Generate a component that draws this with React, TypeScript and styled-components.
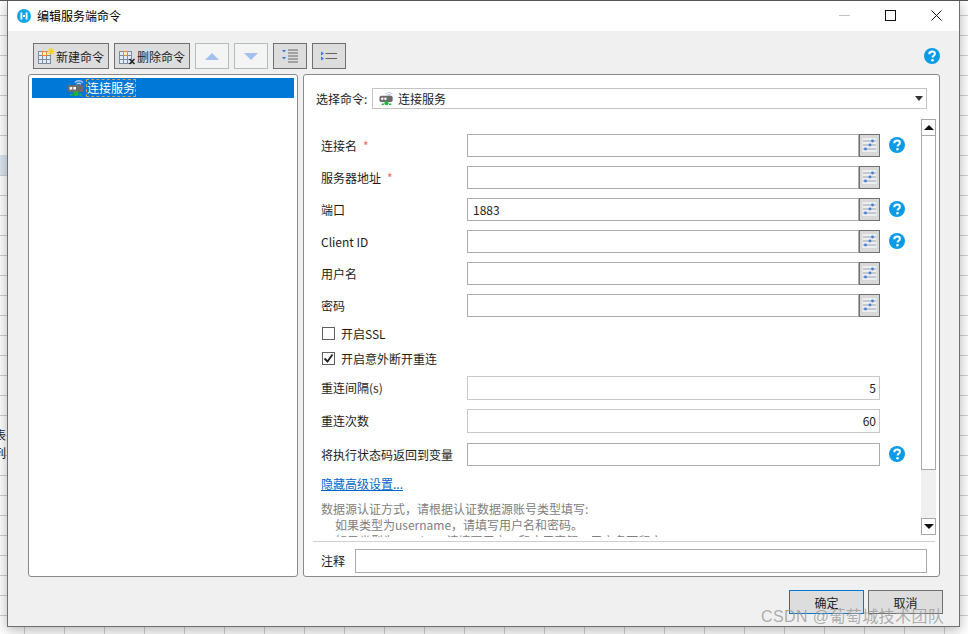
import { createGlobalStyle } from "styled-components";
import styled from "styled-components";

const GlobalStyle = createGlobalStyle`
    html, body {
        margin: 0;
        height: 100%;
        overflow: hidden;
    }
    body {
        font-family: "Noto Sans CJK SC", "Liberation Sans", sans-serif;
        font-size: 12px;
        color: #1c1c1c;
        background-color: #ffffff;
        background-image:
            linear-gradient(to right, #d0d0d0 1px, transparent 1px),
            linear-gradient(to bottom, #d0d0d0 1px, transparent 1px);
        background-size: 40px 20px;
        background-position: 24px 15px;
    }
`;

const Page = styled.div`
    position: relative;
    width: 968px;
    height: 634px;
    overflow: hidden;
    border-top: 1px solid #555555;
    box-sizing: border-box;
`;

const SelectedCell = styled.div`
    position: absolute;
    left: 0;
    top: 154px;
    width: 8px;
    height: 20px;
    background: #dbe6f1;
`;

const BehindText = styled.div`
    position: absolute;
    left: -6px;
    top: 425px;
    line-height: 18px;
    font-size: 12px;
`;

const Dialog = styled.div`
    position: absolute;
    left: 7px;
    top: 0;
    width: 953px;
    height: 626px;
    box-sizing: border-box;
    display: flex;
    flex-direction: column;
    background: #f0f0f0;
    border: 1px solid #6f6f6f;
    border-top: 0;
    box-shadow: 0 3px 12px rgba(0, 0, 0, 0.3);
`;

const TitleBar = styled.div`
    height: 30px;
    flex: none;
    box-sizing: border-box;
    background: #ffffff;
    display: flex;
    align-items: center;
    padding: 0 0 1px 9px;
`;

const Title = styled.div`
    flex: 1;
    font-size: 12px;
    color: #000000;
    margin-left: 6px;
`;

const WinButton = styled.div`
    width: 46px;
    height: 29px;
    display: flex;
    align-items: center;
    justify-content: center;
`;

const Content = styled.div`
    flex: 1;
    display: flex;
    flex-direction: column;
    padding: 12px 19px 0 20px;
    min-height: 0;
`;

const Toolbar = styled.div`
    display: flex;
    align-items: center;
    gap: 5px;
    height: 26px;
    padding-left: 5px;
    margin-bottom: 5px;
`;

const ToolButton = styled.div<{ $w: number; $off?: boolean }>`
    width: ${(p) => p.$w}px;
    height: 26px;
    box-sizing: border-box;
    display: flex;
    align-items: center;
    justify-content: center;
    gap: 1px;
    background: ${(p) => (p.$off ? "#f4f4f4" : "#dddddd")};
    border: 1px solid ${(p) => (p.$off ? "#b5bcbc" : "#707070")};
    font-size: 12px;
`;

const HelpSlot = styled.div`
    margin-left: auto;
    display: flex;
`;

const Panels = styled.div`
    display: flex;
    gap: 5px;
    height: 503px;
`;

const TreePanel = styled.div`
    width: 270px;
    box-sizing: border-box;
    background: #ffffff;
    border: 1px solid #8a8a8a;
    border-radius: 3px;
    padding: 3px;
`;

const TreeRow = styled.div`
    height: 20px;
    background: #0078d7;
    color: #ffffff;
    display: flex;
    align-items: center;
    padding-left: 35px;
    gap: 1px;
`;

const TreeLabel = styled.span`
    outline: 1px dashed #c9a56b;
    outline-offset: -1px;
    padding: 0 1px;
    line-height: 18px;
`;

const FormPanel = styled.div`
    flex: 1;
    box-sizing: border-box;
    background: #ffffff;
    border: 1px solid #8a8a8a;
    border-radius: 3px;
    display: flex;
    flex-direction: column;
    min-width: 0;
`;

const CommandRow = styled.div`
    display: flex;
    align-items: center;
    height: 22px;
    margin: 12px 12px 0 12px;
`;

const CommandLabel = styled.div`
    width: 56px;
    flex: none;
`;

const CommandSelect = styled.div`
    flex: 1;
    height: 21px;
    box-sizing: border-box;
    border: 1px solid #c4c4c4;
    display: flex;
    align-items: center;
    padding: 0 3px 0 6px;
    gap: 4px;
`;

const Caret = styled.span`
    margin-left: auto;
    width: 0;
    height: 0;
    border-left: 4px solid transparent;
    border-right: 4px solid transparent;
    border-top: 5px solid #333333;
`;

const ScrollArea = styled.div`
    flex: 1;
    display: flex;
    min-height: 0;
    margin-top: 10px;
    margin-bottom: 4px;
`;

const Form = styled.div`
    flex: 1;
    min-width: 0;
    overflow: hidden;
    padding: 10px 0 0 17px;
`;

const Row = styled.div<{ $h?: number }>`
    display: flex;
    align-items: center;
    height: ${(p) => p.$h ?? 32}px;
`;

const Label = styled.div`
    width: 146px;
    flex: none;
`;

const Star = styled.span`
    color: #f06a6a;
    margin-left: 6px;
`;

const InputBox = styled.div<{ $light?: boolean }>`
    width: 392px;
    height: 23px;
    box-sizing: border-box;
    border: 1px solid ${(p) => (p.$light ? "#c8c8c8" : "#acacac")};
    background: #ffffff;
    display: flex;
    align-items: center;
    padding: 0 5px;
    font-size: 12px;
`;

const NumberBox = styled(InputBox)`
    width: 413px;
    height: 24px;
    justify-content: flex-end;
    padding-right: 3px;
`;

const WideBox = styled(InputBox)`
    width: 413px;
`;

const SideButton = styled.div`
    width: 21px;
    height: 23px;
    box-sizing: border-box;
    background: #d8d8d8;
    border: 1px solid #707070;
    display: flex;
    align-items: center;
    justify-content: center;
`;

const HelpGap = styled.div`
    margin-left: 9px;
    display: flex;
`;

const CheckRow = styled.div`
    display: flex;
    align-items: center;
    height: 25px;
    gap: 6px;
    padding-left: 1px;
`;

const CheckBox = styled.div`
    width: 13px;
    height: 13px;
    box-sizing: border-box;
    background: #ffffff;
    border: 1px solid #5f5f5f;
    display: flex;
    align-items: center;
    justify-content: center;
`;

const LinkText = styled.div`
    color: #0066cc;
    text-decoration: underline;
    line-height: 18px;
    margin-top: 4px;
`;

const Note = styled.div`
    color: #808080;
    line-height: 16px;
    margin-top: 8px;
    white-space: nowrap;
`;

const NoteLine = styled.div<{ $indent?: boolean }>`
    padding-left: ${(p) => (p.$indent ? 14 : 0)}px;
`;

const ScrollBar = styled.div`
    width: 15px;
    flex: none;
    margin: 0 3px 2px 0;
    background: #f0f0f0;
    display: flex;
    flex-direction: column;
`;

const ScrollEnd = styled.div`
    height: 17px;
    flex: none;
    box-sizing: border-box;
    background: #ffffff;
    border: 1px solid #a8a8a8;
    display: flex;
    align-items: center;
    justify-content: center;
`;

const ScrollThumb = styled.div`
    height: 334px;
    flex: none;
    box-sizing: border-box;
    background: #ffffff;
    border: 1px solid #a8a8a8;
    border-top: 0;
`;

const ScrollRest = styled.div`
    flex: 1;
`;

const Arrow = styled.span<{ $down?: boolean }>`
    width: 0;
    height: 0;
    border-left: 5px solid transparent;
    border-right: 5px solid transparent;
    ${(p) => (p.$down ? "border-top: 5px solid #111111;" : "border-bottom: 5px solid #111111;")}
`;

const CommentRow = styled.div`
    flex: none;
    height: 35px;
    box-sizing: border-box;
    margin: 0 4px 0 9px;
    border-top: 1px solid #d0d0d0;
    display: flex;
    align-items: flex-start;
    padding: 7px 8px 0 8px;
`;

const CommentLabel = styled.div`
    width: 34px;
    flex: none;
    line-height: 24px;
`;

const CommentBox = styled.div`
    flex: 1;
    height: 24px;
    box-sizing: border-box;
    border: 1px solid #acacac;
    background: #ffffff;
`;

const Footer = styled.div`
    display: flex;
    justify-content: flex-end;
    gap: 4px;
    margin-top: 13px;
    margin-right: -3px;
`;

const FooterButton = styled.div<{ $primary?: boolean }>`
    width: 75px;
    height: 24px;
    box-sizing: border-box;
    background: #dddddd;
    border: 1px solid ${(p) => (p.$primary ? "#0078d7" : "#707070")};
    display: flex;
    align-items: center;
    justify-content: center;
`;

const Watermark = styled.div`
    position: absolute;
    left: 761px;
    top: 604px;
    font-family: "Liberation Sans", "Noto Sans CJK SC", sans-serif;
    font-size: 16px;
    line-height: 24px;
    color: rgba(150, 150, 150, 0.75);
    white-space: nowrap;
    letter-spacing: 0.4px;
`;

function HelpIcon() {
    return (
        <svg width="16" height="16" viewBox="0 0 16 16">
            <circle cx="8" cy="8" r="8" fill="#0a9be8" />
            <path d="M5.2 6.2C5.3 4.4 6.5 3.4 8.1 3.4c1.7 0 2.8 1 2.8 2.3 0 1.1-.6 1.6-1.4 2.2-.7.5-.9.8-.9 1.6" fill="none" stroke="#fff" strokeWidth="2" />
            <circle cx="8.5" cy="12.2" r="1.3" fill="#fff" />
        </svg>
    );
}

function SlidersIcon() {
    return (
        <svg width="15" height="14" viewBox="0 0 15 14">
            <rect x="0.5" y="0" width="14" height="14" fill="#eeeeee" />
            <path d="M1 3h13M1 7h13M1 11h13" stroke="#98a3b0" strokeWidth="1" />
            <circle cx="10.5" cy="3" r="1.4" fill="#3f80d8" />
            <circle cx="8" cy="7" r="1.4" fill="#3f80d8" />
            <circle cx="3.5" cy="11" r="1.4" fill="#3f80d8" />
        </svg>
    );
}

function ServerIcon({ size }: { size: number }) {
    return (
        <svg width={size} height={size} viewBox="0 0 17 17">
            <path d="M7.5 3.2a5.4 5.4 0 0 1 7.5 0M9.2 5a3 3 0 0 1 4.1 0" fill="none" stroke="#b8c8e8" strokeWidth="1.3" />
            <rect x="0.5" y="5.5" width="15" height="7" rx="2" fill="#6b6b6b" />
            <rect x="2.5" y="7.5" width="2.5" height="2.5" fill="#fff" />
            <rect x="6" y="7.5" width="2.5" height="2.5" fill="#fff" />
            <circle cx="8.5" cy="13.8" r="2.4" fill="#1fb53a" />
            <path d="M3 15h2.5M11.5 15h2.5" stroke="#1fb53a" strokeWidth="1.5" />
        </svg>
    );
}

function TableIcon({ mark }: { mark: "new" | "del" }) {
    return (
        <svg width="17" height="17" viewBox="0 0 17 17">
            <rect x="0.5" y="3.5" width="12" height="12" fill="#e3ebf5" stroke="#7d8ba3" />
            <path d="M4.5 3.5v12M8.5 3.5v12M0.5 7.5h12M0.5 11.5h12" stroke="#7d8ba3" />
            <rect x="4.5" y="3.5" width="4" height="4" fill="#fbeedd" stroke="#f08a24" />
            {mark === "new" ? (
                <path d="M13 0v7M9.5 3.5h7M10.5 1l5 5M15.5 1l-5 5" stroke="#f5d21f" strokeWidth="1.2" />
            ) : (
                <path d="M10.5 11l5 5M15.5 11l-5 5" stroke="#222" strokeWidth="1.5" />
            )}
        </svg>
    );
}

function OutlineArrow({ down }: { down?: boolean }) {
    return (
        <svg width="14" height="7" viewBox="0 0 14 7">
            <path d={down ? "M0 0h14L7 7z" : "M0 7h14L7 0z"} fill="#a4c0ee" />
        </svg>
    );
}

function IndentIcon({ variant }: { variant: "more" | "less" }) {
    return variant === "more" ? (
        <svg width="16" height="14" viewBox="0 0 16 14">
            <path d="M6 1h10M6 4h10M6 7h10M6 10h10M6 13h10" stroke="#666" strokeWidth="1" />
            <path d="M0 1h4L2 3.5zM0 8h4L2 10.5z" fill="#2f7be0" />
        </svg>
    ) : (
        <svg width="16" height="10" viewBox="0 0 16 10">
            <path d="M4.5 2.5h11.5M4.5 7.5h11.5" stroke="#666" strokeWidth="1" />
            <path d="M0 0.5l3 2-3 2zM0 5.5l3 2-3 2z" fill="#2f7be0" />
        </svg>
    );
}

function AppLogo() {
    return (
        <svg width="14" height="14" viewBox="0 0 14 14">
            <circle cx="7" cy="7" r="7" fill="#12a5e8" />
            <path d="M4.4 3.4v7.2M9.6 3.4v7.2M6 7h2" stroke="#fff" strokeWidth="1.8" />
        </svg>
    );
}

const fields = [
    { label: "连接名", required: true, help: true },
    { label: "服务器地址", required: true, help: false },
    { label: "端口", value: "1883", help: true },
    { label: "Client ID", help: true },
    { label: "用户名", help: false },
    { label: "密码", help: false },
];

function App() {
    return (
        <Page>
            <GlobalStyle />
            <SelectedCell />
            <BehindText>
                <div>表</div>
                <div>列</div>
            </BehindText>
            <Dialog>
                <TitleBar>
                    <AppLogo />
                    <Title>编辑服务端命令</Title>
                    <WinButton>
                        <svg width="11" height="11" viewBox="0 0 11 11">
                            <path d="M0 5.5h11" stroke="#c4c4c4" />
                        </svg>
                    </WinButton>
                    <WinButton>
                        <svg width="11" height="11" viewBox="0 0 11 11">
                            <rect x="0.5" y="0.5" width="10" height="10" fill="none" stroke="#111" />
                        </svg>
                    </WinButton>
                    <WinButton>
                        <svg width="11" height="11" viewBox="0 0 11 11">
                            <path d="M0.5 0.5l10 10M10.5 0.5l-10 10" stroke="#111" />
                        </svg>
                    </WinButton>
                </TitleBar>
                <Content>
                    <Toolbar>
                        <ToolButton $w={76}>
                            <TableIcon mark="new" />
                            新建命令
                        </ToolButton>
                        <ToolButton $w={76}>
                            <TableIcon mark="del" />
                            删除命令
                        </ToolButton>
                        <ToolButton $w={34} $off>
                            <OutlineArrow />
                        </ToolButton>
                        <ToolButton $w={34} $off>
                            <OutlineArrow down />
                        </ToolButton>
                        <ToolButton $w={34}>
                            <IndentIcon variant="more" />
                        </ToolButton>
                        <ToolButton $w={34}>
                            <IndentIcon variant="less" />
                        </ToolButton>
                        <HelpSlot>
                            <HelpIcon />
                        </HelpSlot>
                    </Toolbar>
                    <Panels>
                        <TreePanel>
                            <TreeRow>
                                <ServerIcon size={18} />
                                <TreeLabel>连接服务</TreeLabel>
                            </TreeRow>
                        </TreePanel>
                        <FormPanel>
                            <CommandRow>
                                <CommandLabel>选择命令:</CommandLabel>
                                <CommandSelect>
                                    <ServerIcon size={15} />
                                    连接服务
                                    <Caret />
                                </CommandSelect>
                            </CommandRow>
                            <ScrollArea>
                                <Form>
                                    {fields.map((f) => (
                                        <Row key={f.label}>
                                            <Label>
                                                {f.label}
                                                {f.required && <Star>*</Star>}
                                            </Label>
                                            <InputBox>{f.value}</InputBox>
                                            <SideButton>
                                                <SlidersIcon />
                                            </SideButton>
                                            {f.help && (
                                                <HelpGap>
                                                    <HelpIcon />
                                                </HelpGap>
                                            )}
                                        </Row>
                                    ))}
                                    <CheckRow>
                                        <CheckBox />
                                        开启SSL
                                    </CheckRow>
                                    <CheckRow>
                                        <CheckBox>
                                            <svg width="11" height="11" viewBox="0 0 11 11">
                                                <path d="M1.5 5.5l3 3 5-7" fill="none" stroke="#222" strokeWidth="1.8" />
                                            </svg>
                                        </CheckBox>
                                        开启意外断开重连
                                    </CheckRow>
                                    <Row $h={33}>
                                        <Label>重连间隔(s)</Label>
                                        <NumberBox $light>5</NumberBox>
                                    </Row>
                                    <Row $h={33}>
                                        <Label>重连次数</Label>
                                        <NumberBox $light>60</NumberBox>
                                    </Row>
                                    <Row $h={34}>
                                        <Label>将执行状态码返回到变量</Label>
                                        <WideBox />
                                        <HelpGap>
                                            <HelpIcon />
                                        </HelpGap>
                                    </Row>
                                    <LinkText>隐藏高级设置...</LinkText>
                                    <Note>
                                        <NoteLine>数据源认证方式，请根据认证数据源账号类型填写:</NoteLine>
                                        <NoteLine $indent>如果类型为username，请填写用户名和密码。</NoteLine>
                                        <NoteLine $indent>如果类型为oauth2，请填写用户ID和应用密钥，用户名可留空。</NoteLine>
                                    </Note>
                                </Form>
                                <ScrollBar>
                                    <ScrollEnd>
                                        <Arrow />
                                    </ScrollEnd>
                                    <ScrollThumb />
                                    <ScrollRest />
                                    <ScrollEnd>
                                        <Arrow $down />
                                    </ScrollEnd>
                                </ScrollBar>
                            </ScrollArea>
                            <CommentRow>
                                <CommentLabel>注释</CommentLabel>
                                <CommentBox />
                            </CommentRow>
                        </FormPanel>
                    </Panels>
                    <Footer>
                        <FooterButton $primary>确定</FooterButton>
                        <FooterButton>取消</FooterButton>
                    </Footer>
                </Content>
            </Dialog>
            <Watermark>CSDN @葡萄城技术团队</Watermark>
        </Page>
    );
}

export default App;
